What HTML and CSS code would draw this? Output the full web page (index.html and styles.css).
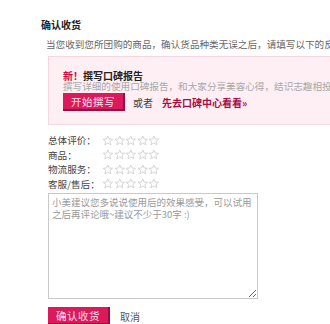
FILE: index.html
```html
<!DOCTYPE html>
<html lang="zh-cn">
<head>
  <meta charset="UTF-8" />
  <title>确认收货</title>
  <link rel="stylesheet" href="styles.css">
</head>
<body>

<div class="page">
  <h2 class="title">确认收货</h2>
  <p class="intro">当您收到您所团购的商品，确认货品种类无误之后，请填写以下的反馈信息，帮助其他用户。</p>

  <!-- 口碑报告 -->
  <div class="report">
    <h3><span class="new">新！</span>撰写口碑报告</h3>
    <p class="tip">撰写详细的使用口碑报告，和大家分享美容心得，结识志趣相投的朋友们。</p>
    <div class="report-actions">
      <button class="btn">开始撰写</button>
      <span class="or">或者</span>
      <a class="more" href="#">先去口碑中心看看»</a>
    </div>
  </div>

  <!-- 评分 -->
  <div class="rating">
    <span class="label">总体评价：</span><span class="stars" data-n="5"></span>
    <span class="label">商品：</span><span class="stars" data-n="5"></span>
    <span class="label">物流服务：</span><span class="stars" data-n="5"></span>
    <span class="label">客服/售后：</span><span class="stars" data-n="5"></span>
  </div>

  <textarea class="comment" placeholder="小美建议您多说说使用后的效果感受，可以试用之后再评论哦~建议不少于30字 :)"></textarea>

  <div class="actions">
    <button class="btn">确认收货</button>
    <a class="cancel" href="#">取消</a>
  </div>
</div>

<script>
const star = '<svg viewBox="0 0 12 11" width="11.6" height="11"><polygon points="6,0.8 7.4,4 10.9,4.2 8.2,6.5 9.1,10 6,8.1 2.9,10 3.8,6.5 1.1,4.2 4.6,4" fill="none" stroke="#cfcfcf" stroke-width="0.9"/></svg>';
document.querySelectorAll(".stars").forEach(function (el) {
  el.innerHTML = star.repeat(parseInt(el.dataset.n));
});
</script>

</body>
</html>
```

FILE: styles.css
```css
html, body {
  margin: 0;
  overflow: hidden;
  background: #fff;
}
body {
  font-family: "Noto Sans CJK SC", "DejaVu Sans", sans-serif;
  font-size: 9.6px;
  color: #444;
}
.page {
  padding: 18px 0 0 41px;
  width: 420px;
}
.title {
  margin: 0;
  font-size: 10px;
  line-height: 14px;
  font-weight: bold;
  color: #222;
}
.intro {
  margin: 5px 0 0 5px;
  line-height: 14px;
  white-space: nowrap;
  color: #666;
}
.report {
  margin: 5px 0 0 7px;
  background: #fdeff4;
  border: 1px solid #f6d6e1;
  padding: 13px 0 13px 14px;
}
.report h3 {
  margin: 0;
  font-size: 10px;
  line-height: 11px;
  color: #222;
}
.report .new {
  color: #d3073f;
}
.tip {
  margin: 0;
  line-height: 11px;
  white-space: nowrap;
  color: #a8a8a8;
}
.report-actions {
  margin-top: 1px;
  display: flex;
  align-items: center;
}
.btn {
  background: #da1a5d;
  color: #fbe3ec;
  border: none;
  border-right: 2px solid #9d0c3c;
  border-bottom: 2px solid #9d0c3c;
  width: 62px;
  height: 18px;
  padding: 0;
  font-family: inherit;
  font-size: 10.5px;
  letter-spacing: 0.5px;
  cursor: pointer;
}
.or {
  margin-left: 8px;
  font-size: 10px;
  color: #444;
}
.more {
  margin-left: 9px;
  font-size: 10px;
  font-weight: bold;
  color: #a60f48;
  text-decoration: none;
}
.rating {
  margin: 8px 0 0 7px;
  display: grid;
  grid-template-columns: 54px auto;
  line-height: 14.5px;
  color: #444;
}
.stars {
  display: flex;
  align-items: center;
}
.stars svg {
  display: block;
}
.comment {
  display: block;
  margin: 2px 0 0 7px;
  width: 210px;
  height: 106px;
  box-sizing: border-box;
  border: 1px solid #c9c9c9;
  padding: 2px 3px;
  font-family: inherit;
  font-size: 9.5px;
  line-height: 12px;
  resize: both;
}
.comment::placeholder {
  color: #9a9a9a;
}
.actions {
  margin: 8px 0 0 7px;
  display: flex;
  align-items: center;
}
.cancel {
  margin-left: 10px;
  font-size: 10px;
  color: #555;
  text-decoration: none;
}
```
